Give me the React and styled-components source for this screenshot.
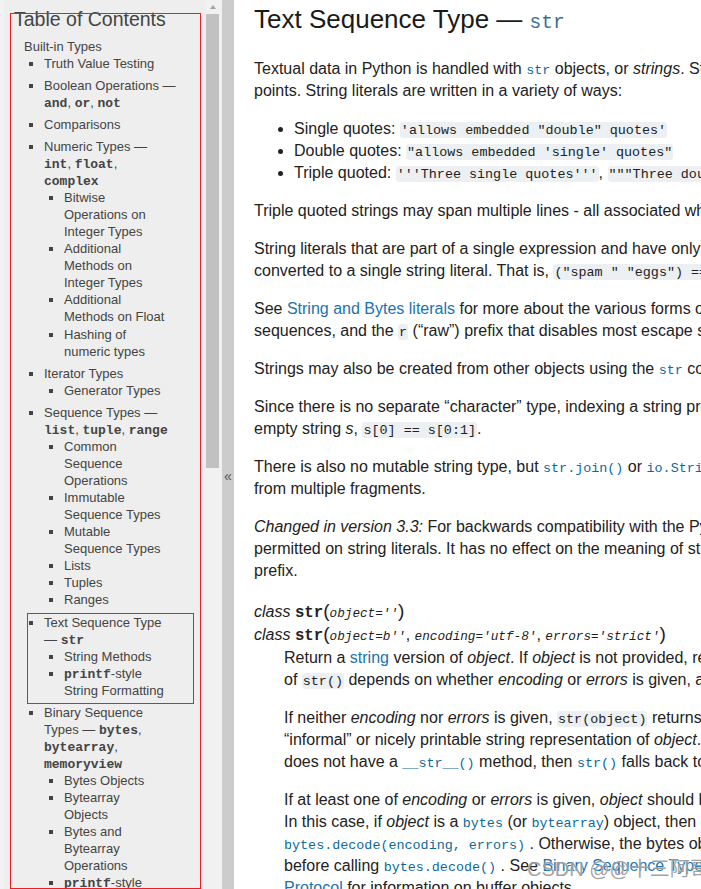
import React from "react";
import styled, { createGlobalStyle } from "styled-components";

const GlobalStyle = createGlobalStyle`
  html, body {
    margin: 0;
    padding: 0;
  }
  body {
    background: #fff;
    font-family: "Liberation Sans", Arial, sans-serif;
    overflow: hidden;
  }
`;

const MONO = `"Liberation Mono", "Courier New", monospace`;

const Page = styled.div`
  position: relative;
  display: flex;
  width: 701px;
  height: 889px;
  overflow: hidden;
`;

// sidebar
const SideColumn = styled.aside`
  display: flex;
  flex-shrink: 0;
  padding-left: 4px;
  background: #f2f2f2;
`;

const Toc = styled.nav`
  width: 192px;
  padding: 7px 0 0 10px;
  background: #eee;
  color: #444;
  font-size: 13px;
  line-height: 17.04px;
  white-space: nowrap;
  overflow: hidden;
`;

const TocTitle = styled.h3`
  margin: 0 0 6.5px;
  font-size: 19.5px;
  line-height: 24px;
  font-weight: normal;
  color: #444;
`;

const TocRoot = styled.ul`
  list-style: none;
  margin: 0 0 0 10px;
  padding: 0;
`;

const TocGroup = styled.ul`
  list-style: square;
  margin: 0 0 0 20px;
  padding: 0;
`;

const TocEntry = styled.li`
  margin-bottom: ${(p) => (p.$major ? "5.1px" : "0")};
`;

const Kw = styled.code`
  font-family: ${MONO};
  font-size: 13px;
  font-weight: bold;
  line-height: 1;
`;

const ScrollTrack = styled.div`
  display: flex;
  flex-direction: column;
  width: 16px;
  background: #f1f1f1;
`;

const ScrollArrow = styled.div`
  display: flex;
  align-items: center;
  justify-content: center;
  width: 13px;
  height: 14px;

  &::before {
    content: "";
    border-left: 3.5px solid transparent;
    border-right: 3.5px solid transparent;
    border-bottom: 4px solid #a3a3a3;
  }
`;

const ScrollThumb = styled.div`
  width: 13px;
  height: 454px;
  background: #c1c1c1;
`;

const CollapseBar = styled.div`
  display: flex;
  justify-content: center;
  width: 12px;
  padding-top: 468px;
  background: #ccc;
  color: #555;
  font-size: 14px;
  line-height: 16px;
`;

// content
const Main = styled.main`
  flex: 1;
  min-width: 0;
  padding: 3px 0 0 20px;
  color: #222;
  font-size: 16px;
  line-height: 22px;
  white-space: nowrap;
  overflow: hidden;
`;

const Title = styled.h1`
  margin: 0 0 22.5px;
  font-size: 26px;
  line-height: 32px;
  font-weight: normal;
  color: #1a1a1a;
`;

const TitleCode = styled.code`
  font-family: ${MONO};
  font-size: 19.5px;
  line-height: 1;
  color: #3d6f93;
`;

const Para = styled.p`
  margin: 0 0 16px;
`;

const BulletList = styled.ul`
  margin: 0 0 16px;
  padding-left: 40px;
  list-style: disc;
`;

const Lit = styled.code`
  font-family: ${MONO};
  font-size: 13.4px;
  line-height: 1;
  padding: 1px 1px 0;
  border-radius: 3px;
  background: #ecf0f3;
  color: #222;
`;

const XRef = styled.a`
  color: #1a73ad;
  text-decoration: none;
`;

const XCode = styled.code`
  font-family: ${MONO};
  font-size: 13.4px;
  line-height: 1;
  color: #0b6a9c;
`;

const DefList = styled.dl`
  margin: 18px 0 0;
`;

const Signature = styled.dt`
  line-height: 23px;
`;

const SigName = styled.code`
  font-family: ${MONO};
  font-size: 15.7px;
  font-weight: bold;
  line-height: 1;
  color: #222;
`;

const SigParen = styled.span`
  font-size: 19.2px;
  line-height: 1;
`;

const SigParam = styled.em`
  font-family: ${MONO};
  font-size: 12.7px;
  line-height: 1;
`;

const Desc = styled.dd`
  margin: 1px 0 0 30px;
`;

// overlays: screenshot annotation boxes and watermark
const Annot = styled.div`
  position: absolute;
  left: ${(p) => p.$x}px;
  top: ${(p) => p.$y}px;
  width: ${(p) => p.$w}px;
  height: ${(p) => p.$h}px;
  box-sizing: border-box;
  border: 1px solid #ee1c25;
  pointer-events: none;
`;

const Watermark = styled.div`
  position: absolute;
  left: 527px;
  top: 857px;
  font-family: "Liberation Sans", "Noto Sans CJK SC", sans-serif;
  font-size: 20px;
  line-height: 24px;
  color: rgba(120, 120, 120, 0.7);
  text-shadow: 0 0 1px rgba(255, 255, 255, 0.9);
  white-space: nowrap;
  pointer-events: none;
`;

const Sidebar = () => (
  <SideColumn>
    <Toc>
      <TocTitle>Table of Contents</TocTitle>
      <TocRoot>
        <li>
          Built-in Types
          <TocGroup>
            <TocEntry $major>Truth Value Testing</TocEntry>
            <TocEntry $major>
              Boolean Operations —<br />
              <Kw>and</Kw>, <Kw>or</Kw>, <Kw>not</Kw>
            </TocEntry>
            <TocEntry $major>Comparisons</TocEntry>
            <TocEntry $major>
              Numeric Types —<br />
              <Kw>int</Kw>, <Kw>float</Kw>,<br />
              <Kw>complex</Kw>
              <TocGroup>
                <TocEntry>
                  Bitwise
                  <br />
                  Operations on
                  <br />
                  Integer Types
                </TocEntry>
                <TocEntry>
                  Additional
                  <br />
                  Methods on
                  <br />
                  Integer Types
                </TocEntry>
                <TocEntry>
                  Additional
                  <br />
                  Methods on Float
                </TocEntry>
                <TocEntry>
                  Hashing of
                  <br />
                  numeric types
                </TocEntry>
              </TocGroup>
            </TocEntry>
            <TocEntry $major>
              Iterator Types
              <TocGroup>
                <TocEntry>Generator Types</TocEntry>
              </TocGroup>
            </TocEntry>
            <TocEntry $major>
              Sequence Types —<br />
              <Kw>list</Kw>, <Kw>tuple</Kw>, <Kw>range</Kw>
              <TocGroup>
                <TocEntry>
                  Common
                  <br />
                  Sequence
                  <br />
                  Operations
                </TocEntry>
                <TocEntry>
                  Immutable
                  <br />
                  Sequence Types
                </TocEntry>
                <TocEntry>
                  Mutable
                  <br />
                  Sequence Types
                </TocEntry>
                <TocEntry>Lists</TocEntry>
                <TocEntry>Tuples</TocEntry>
                <TocEntry>Ranges</TocEntry>
              </TocGroup>
            </TocEntry>
            <TocEntry $major>
              Text Sequence Type
              <br />— <Kw>str</Kw>
              <TocGroup>
                <TocEntry>String Methods</TocEntry>
                <TocEntry>
                  <Kw>printf</Kw>-style
                  <br />
                  String Formatting
                </TocEntry>
              </TocGroup>
            </TocEntry>
            <TocEntry $major>
              Binary Sequence
              <br />
              Types — <Kw>bytes</Kw>,<br />
              <Kw>bytearray</Kw>,<br />
              <Kw>memoryview</Kw>
              <TocGroup>
                <TocEntry>Bytes Objects</TocEntry>
                <TocEntry>
                  Bytearray
                  <br />
                  Objects
                </TocEntry>
                <TocEntry>
                  Bytes and
                  <br />
                  Bytearray
                  <br />
                  Operations
                </TocEntry>
                <TocEntry>
                  <Kw>printf</Kw>-style
                  <br />
                  Bytes Formatting
                </TocEntry>
                <TocEntry>Memory Views</TocEntry>
              </TocGroup>
            </TocEntry>
          </TocGroup>
        </li>
      </TocRoot>
    </Toc>
    <ScrollTrack>
      <ScrollArrow />
      <ScrollThumb />
    </ScrollTrack>
    <CollapseBar>«</CollapseBar>
  </SideColumn>
);

const Content = () => (
  <Main>
    <Title>
      Text Sequence Type — <TitleCode>str</TitleCode>
    </Title>

    <Para>
      Textual data in Python is handled with{" "}
      <XRef href="#str">
        <XCode>str</XCode>
      </XRef>{" "}
      objects, or <em>strings</em>. Strings are immutable sequences of Unicode code
      <br />
      points. String literals are written in a variety of ways:
    </Para>

    <BulletList>
      <li>
        Single quotes: <Lit>{`'allows embedded "double" quotes'`}</Lit>
      </li>
      <li>
        Double quotes: <Lit>{`"allows embedded 'single' quotes"`}</Lit>
      </li>
      <li>
        Triple quoted: <Lit>{`'''Three single quotes'''`}</Lit>,{" "}
        <Lit>{`"""Three double quotes"""`}</Lit>
      </li>
    </BulletList>

    <Para>
      Triple quoted strings may span multiple lines - all associated whitespace will be
      included in the string literal.
    </Para>

    <Para>
      String literals that are part of a single expression and have only whitespace between
      them will be implicitly
      <br />
      converted to a single string literal. That is,{" "}
      <Lit>{`("spam " "eggs") == "spam eggs"`}</Lit>.
    </Para>

    <Para>
      See <XRef href="#strings">String and Bytes literals</XRef> for more about the various
      forms of string literal, including supported escape
      <br />
      sequences, and the <Lit>r</Lit> (“raw”) prefix that disables most escape sequence
      processing.
    </Para>

    <Para>
      Strings may also be created from other objects using the{" "}
      <XRef href="#str">
        <XCode>str</XCode>
      </XRef>{" "}
      constructor.
    </Para>

    <Para>
      Since there is no separate “character” type, indexing a string produces strings of
      length 1. That is, for a non-
      <br />
      empty string <em>s</em>, <Lit>s[0] == s[0:1]</Lit>.
    </Para>

    <Para>
      There is also no mutable string type, but{" "}
      <XRef href="#str.join">
        <XCode>str.join()</XCode>
      </XRef>{" "}
      or{" "}
      <XRef href="#io.StringIO">
        <XCode>io.StringIO</XCode>
      </XRef>{" "}
      can be used to efficiently construct strings
      <br />
      from multiple fragments.
    </Para>

    <Para>
      <em>Changed in version 3.3:</em> For backwards compatibility with the Python 2 series,
      the <Lit>u</Lit> prefix is once again
      <br />
      permitted on string literals. It has no effect on the meaning of string literals and
      cannot be combined with the <Lit>r</Lit>
      <br />
      prefix.
    </Para>

    <DefList>
      <Signature>
        <em>class </em>
        <SigName>str</SigName>
        <SigParen>(</SigParen>
        <SigParam>object=''</SigParam>
        <SigParen>)</SigParen>
      </Signature>
      <Signature>
        <em>class </em>
        <SigName>str</SigName>
        <SigParen>(</SigParen>
        <SigParam>object=b''</SigParam>, <SigParam>encoding='utf-8'</SigParam>,{" "}
        <SigParam>errors='strict'</SigParam>
        <SigParen>)</SigParen>
      </Signature>
      <Desc>
        <Para>
          Return a <XRef href="#textseq">string</XRef> version of <em>object</em>. If{" "}
          <em>object</em> is not provided, returns the empty string. Otherwise, the behavior
          <br />
          of <Lit>str()</Lit> depends on whether <em>encoding</em> or <em>errors</em> is
          given, as follows.
        </Para>

        <Para>
          If neither <em>encoding</em> nor <em>errors</em> is given,{" "}
          <Lit>str(object)</Lit> returns{" "}
          <XRef href="#object.__str__">
            <XCode>type(object).__str__(object)</XCode>
          </XRef>
          , which is the
          <br />
          “informal” or nicely printable string representation of <em>object</em>. For
          string objects, this is the string itself. If <em>object</em>
          <br />
          does not have a{" "}
          <XRef href="#object.__str__">
            <XCode>__str__()</XCode>
          </XRef>{" "}
          method, then{" "}
          <XRef href="#str">
            <XCode>str()</XCode>
          </XRef>{" "}
          falls back to returning{" "}
          <XRef href="#repr">
            <XCode>repr(object)</XCode>
          </XRef>
          .
        </Para>

        <Para>
          If at least one of <em>encoding</em> or <em>errors</em> is given, <em>object</em>{" "}
          should be a <XRef href="#bytes-like">bytes-like object</XRef> (e.g.{" "}
          <XRef href="#bytes">
            <XCode>bytes</XCode>
          </XRef>{" "}
          or{" "}
          <XRef href="#bytearray">
            <XCode>bytearray</XCode>
          </XRef>
          ).
          <br />
          In this case, if <em>object</em> is a{" "}
          <XRef href="#bytes">
            <XCode>bytes</XCode>
          </XRef>{" "}
          (or{" "}
          <XRef href="#bytearray">
            <XCode>bytearray</XCode>
          </XRef>
          ) object, then <Lit>str(bytes, encoding, errors)</Lit> is equivalent to
          <br />
          <XRef href="#bytes.decode">
            <XCode>bytes.decode(encoding, errors)</XCode>
          </XRef>{" "}
          . Otherwise, the bytes object underlying the buffer object is obtained
          <br />
          before calling{" "}
          <XRef href="#bytes.decode">
            <XCode>bytes.decode()</XCode>
          </XRef>{" "}
          . See{" "}
          <XRef href="#binaryseq">Binary Sequence Types — bytes, bytearray, memoryview</XRef>{" "}
          and <XRef href="#bufferobjects">Buffer</XRef>
          <br />
          <XRef href="#bufferobjects">Protocol</XRef> for information on buffer objects.
        </Para>
      </Desc>
    </DefList>
  </Main>
);

const App = () => (
  <>
    <GlobalStyle />
    <Page>
      <Sidebar />
      <Content />
      <Annot $x={10} $y={13} $w={191} $h={876} />
      <Annot $x={27} $y={613} $w={167} $h={91} />
      <Watermark>CSDN @@十三阿哥</Watermark>
    </Page>
  </>
);

export default App;
